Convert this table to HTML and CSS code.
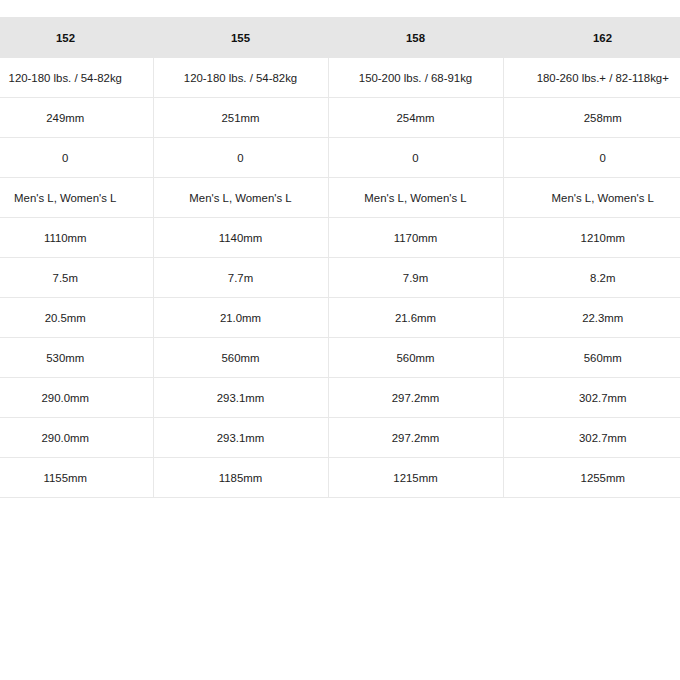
FILE: index.html
```html
<!DOCTYPE html>
<html>
<head>
<meta charset="utf-8">
<link rel="stylesheet" href="styles.css">
</head>
<body>
<div class="wrap">
<table class="specs">
  <colgroup>
    <col class="c1"><col class="c2"><col class="c3"><col class="c4">
  </colgroup>
  <thead>
    <tr><th>152</th><th>155</th><th>158</th><th>162</th></tr>
  </thead>
  <tbody>
    <tr><td>120-180 lbs. / 54-82kg</td><td>120-180 lbs. / 54-82kg</td><td>150-200 lbs. / 68-91kg</td><td>180-260 lbs.+ / 82-118kg+</td></tr>
    <tr><td>249mm</td><td>251mm</td><td>254mm</td><td>258mm</td></tr>
    <tr><td>0</td><td>0</td><td>0</td><td>0</td></tr>
    <tr><td>Men's L, Women's L</td><td>Men's L, Women's L</td><td>Men's L, Women's L</td><td>Men's L, Women's L</td></tr>
    <tr><td>1110mm</td><td>1140mm</td><td>1170mm</td><td>1210mm</td></tr>
    <tr><td>7.5m</td><td>7.7m</td><td>7.9m</td><td>8.2m</td></tr>
    <tr><td>20.5mm</td><td>21.0mm</td><td>21.6mm</td><td>22.3mm</td></tr>
    <tr><td>530mm</td><td>560mm</td><td>560mm</td><td>560mm</td></tr>
    <tr><td>290.0mm</td><td>293.1mm</td><td>297.2mm</td><td>302.7mm</td></tr>
    <tr><td>290.0mm</td><td>293.1mm</td><td>297.2mm</td><td>302.7mm</td></tr>
    <tr><td>1155mm</td><td>1185mm</td><td>1215mm</td><td>1255mm</td></tr>
  </tbody>
</table>
</div>
</body>
</html>
```
FILE: styles.css
```css
html, body {
  margin: 0;
  padding: 0;
  background: #fff;
  overflow: hidden;
}
.wrap {
  padding-top: 17px;
  margin-left: -22px;
}
.specs {
  border-collapse: collapse;
  table-layout: fixed;
  width: 724px;
  font-family: "Liberation Sans", Arial, sans-serif;
  font-size: 11.4px;
  color: #222;
}
.c1, .c2, .c3 { width: 175px; }
.c4 { width: 199px; }
.specs th {
  background: #e6e6e6;
  font-weight: bold;
  height: 41px;
  padding: 0;
  text-align: center;
  color: #111;
}
.specs td {
  height: 39px;
  padding: 0;
  text-align: center;
  border-bottom: 1px solid #e8e8e8;
  border-left: 1px solid #e8e8e8;
}
.specs td:first-child { border-left: none; }
```
